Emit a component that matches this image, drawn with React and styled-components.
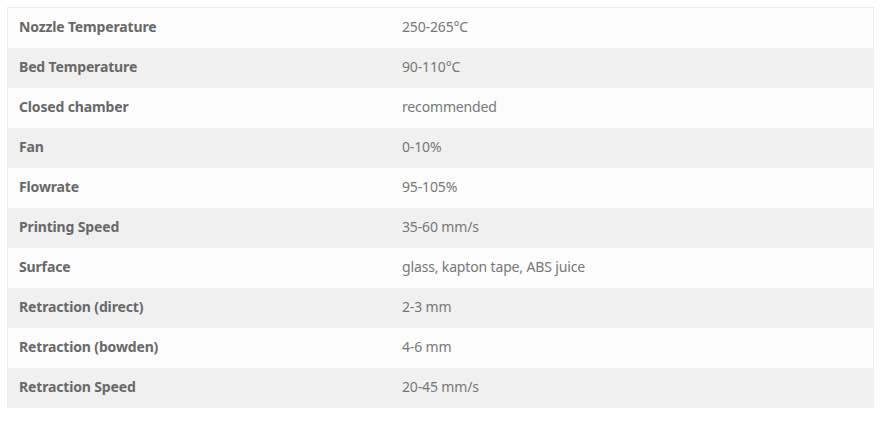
import React from "react";
import styled, { createGlobalStyle } from "styled-components";

const Global = createGlobalStyle`
  body {
    margin: 7px;
    background: #ffffff;
    font-family: "Noto Sans", "Open Sans", sans-serif;
  }
`;

const Table = styled.table`
  width: 867px;
  border-collapse: collapse;
  border: 1px solid #ececec;
  border-bottom: none;
  font-size: 14px;
  letter-spacing: -0.15px;
`;

const Row = styled.tr`
  height: 40px;
  background: ${(p) => (p.$alt ? "#f0f0f0" : "#fcfcfc")};
`;

const Label = styled.td`
  width: 361px;
  padding: 0 11px 2px 11px;
  font-weight: 700;
  color: #686868;
  vertical-align: middle;
`;

const Value = styled.td`
  padding: 0 11px 2px 11px;
  color: #777777;
  vertical-align: middle;
`;

const rows = [
  ["Nozzle Temperature", "250-265°C"],
  ["Bed Temperature", "90-110°C"],
  ["Closed chamber", "recommended"],
  ["Fan", "0-10%"],
  ["Flowrate", "95-105%"],
  ["Printing Speed", "35-60 mm/s"],
  ["Surface", "glass, kapton tape, ABS juice"],
  ["Retraction (direct)", "2-3 mm"],
  ["Retraction (bowden)", "4-6 mm"],
  ["Retraction Speed", "20-45 mm/s"],
];

export default function App() {
  return (
    <>
      <Global />
      <Table>
        <tbody>
          {rows.map(([k, v], i) => (
            <Row key={k} $alt={i % 2 === 1}>
              <Label>{k}</Label>
              <Value>{v}</Value>
            </Row>
          ))}
        </tbody>
      </Table>
    </>
  );
}
